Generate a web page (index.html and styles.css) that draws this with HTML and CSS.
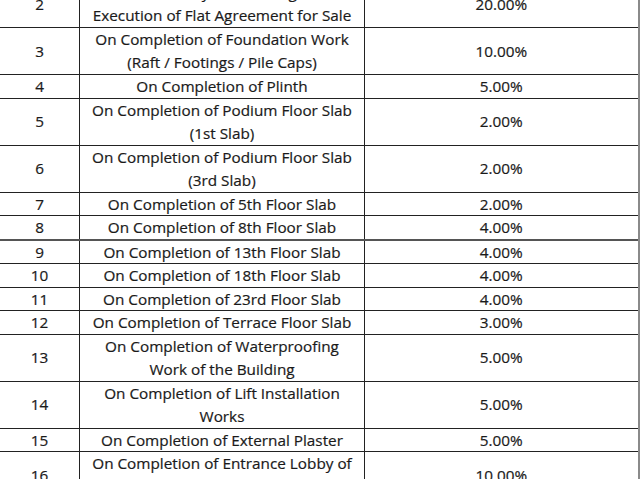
FILE: index.html
```html
<!DOCTYPE html>
<html>
<head>
<meta charset="utf-8">
<link rel="stylesheet" href="styles.css">
</head>
<body>
<table class="schedule">
  <colgroup><col class="c-no"><col class="c-stage"><col class="c-pct"></colgroup>
  <tr><td>2</td><td>Within 15 days of Booking / On<br>Execution of Flat Agreement for Sale</td><td>20.00%</td></tr>
  <tr><td>3</td><td>On Completion of Foundation Work<br>(Raft / Footings / Pile Caps)</td><td>10.00%</td></tr>
  <tr class="one"><td>4</td><td>On Completion of Plinth</td><td>5.00%</td></tr>
  <tr><td>5</td><td>On Completion of Podium Floor Slab<br>(1st Slab)</td><td>2.00%</td></tr>
  <tr><td>6</td><td>On Completion of Podium Floor Slab<br>(3rd Slab)</td><td>2.00%</td></tr>
  <tr class="one"><td>7</td><td>On Completion of 5th Floor Slab</td><td>2.00%</td></tr>
  <tr class="one"><td>8</td><td>On Completion of 8th Floor Slab</td><td>4.00%</td></tr>
  <tr class="one mark"><td>9</td><td>On Completion of 13th Floor Slab</td><td>4.00%</td></tr>
  <tr class="one"><td>10</td><td>On Completion of 18th Floor Slab</td><td>4.00%</td></tr>
  <tr class="one"><td>11</td><td>On Completion of 23rd Floor Slab</td><td>4.00%</td></tr>
  <tr class="one"><td>12</td><td>On Completion of Terrace Floor Slab</td><td>3.00%</td></tr>
  <tr><td>13</td><td>On Completion of Waterproofing<br>Work of the Building</td><td>5.00%</td></tr>
  <tr><td>14</td><td>On Completion of Lift Installation<br>Works</td><td>5.00%</td></tr>
  <tr class="one"><td>15</td><td>On Completion of External Plaster</td><td>5.00%</td></tr>
  <tr><td>16</td><td>On Completion of Entrance Lobby of<br>the Building</td><td>10.00%</td></tr>
</table>
</body>
</html>
```
FILE: styles.css
```css
html, body {
  margin: 0;
  padding: 0;
  background: #fff;
  overflow: hidden;
}
.schedule {
  border-collapse: collapse;
  margin-top: -20px;
  margin-left: -1px;
  font-family: "Open Sans", "Liberation Sans", sans-serif;
  font-size: 15.3px;
  color: #1a1a1a;
  -webkit-text-stroke: 0.2px #1a1a1a;
  table-layout: fixed;
  width: 639px;
}
.c-no { width: 80px; }
.c-stage { width: 285px; }
.c-pct { width: 274px; }
.schedule td {
  border: 1px solid #222;
  padding: 0;
  text-align: center;
  vertical-align: middle;
  line-height: 23px;
}
.schedule tr.one td { line-height: 22.5px; }
.schedule td:last-child { border-right: 2px solid #8a8a8a; }
.schedule tr.mark td { border-top: 2px solid #555; }
```
